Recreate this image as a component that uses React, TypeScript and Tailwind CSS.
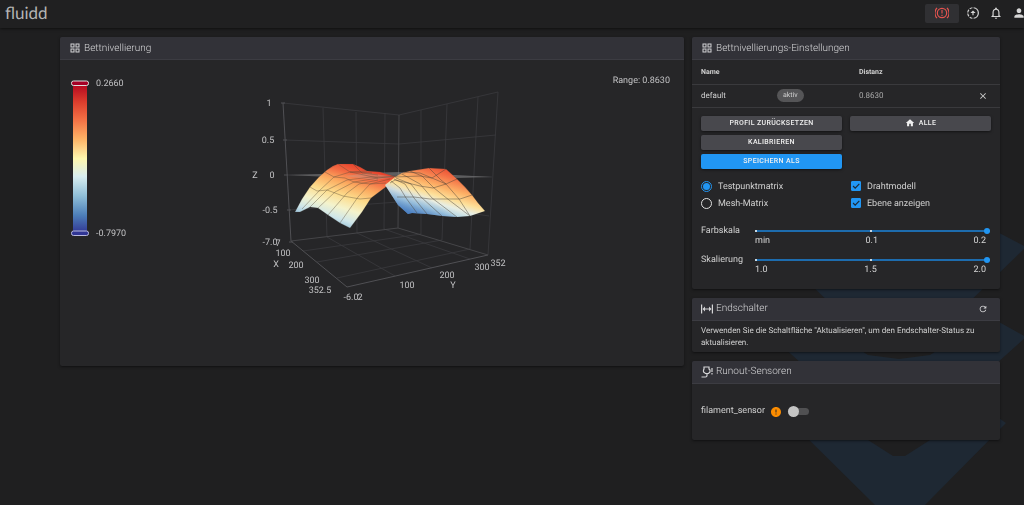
import { useState } from "react";
import type { ReactNode } from "react";
import {
  MdClose,
  MdError,
  MdHome,
  MdOutlineGridView,
  MdOutlineNotifications,
  MdPerson,
  MdRefresh,
} from "react-icons/md";

function BrakeAlertIcon() {
  return (
    <svg viewBox="0 0 24 24" className="size-3.5" fill="currentColor" aria-hidden="true">
      <path d="M12 3a9 9 0 1 0 0 18 9 9 0 0 0 0-18Zm0 16a7 7 0 1 1 0-14 7 7 0 0 1 0 14Z" />
      <path d="M11 7h2v6h-2zM11 15h2v2h-2z" />
      <path d="M4.2 3.8 2.8 2.4a13.6 13.6 0 0 0 0 19.2l1.4-1.4a11.6 11.6 0 0 1 0-16.4ZM19.8 3.8l1.4-1.4a13.6 13.6 0 0 1 0 19.2l-1.4-1.4a11.6 11.6 0 0 0 0-16.4Z" />
    </svg>
  );
}

function ProgressUploadIcon() {
  return (
    <svg viewBox="0 0 24 24" className="size-3.5" fill="currentColor" aria-hidden="true">
      <path d="M13 2.03v2.02a8 8 0 0 1 0 15.9v2.02A10 10 0 0 0 13 2.03ZM11 2.03a10 10 0 0 0-5.3 2.2l1.4 1.48A8 8 0 0 1 11 4.06V2.03ZM4.26 5.67A10 10 0 0 0 2.05 11h2a8 8 0 0 1 1.63-3.9L4.26 5.67ZM2.06 13a10 10 0 0 0 2.2 5.33l1.42-1.43A8 8 0 0 1 4.06 13h-2ZM7.1 18.37 5.67 19.74A10 10 0 0 0 11 22v-2a8 8 0 0 1-3.9-1.63Z" />
      <path d="M12 7.5 7.5 12H11v4h2v-4h3.5L12 7.5Z" />
    </svg>
  );
}

function ExpandHorizontalIcon() {
  return (
    <svg viewBox="0 0 24 24" className="size-3" fill="currentColor" aria-hidden="true">
      <path d="M0 3h2.4v18H0zM21.6 3H24v18h-2.4zM8 7v4h8V7l5 5-5 5v-4H8v4l-5-5 5-5Z" />
    </svg>
  );
}

function RunoutIcon() {
  return (
    <svg viewBox="0 0 24 24" className="size-3" fill="none" stroke="currentColor" strokeWidth="2.4" aria-hidden="true">
      <path d="M6 2h10v4l2 2v4l-3 3H9l-4-3V8l1-2V2Z" />
      <path d="M12 15v4c0 2-1 3-3 3H1M22 4v8M22 14v3" />
    </svg>
  );
}

function BackgroundLogo() {
  return (
    <svg viewBox="0 0 260 290" className="pointer-events-none fixed -right-1 bottom-0 h-[290px] w-[260px]" aria-hidden="true">
      <g fill="#1e2833">
        <path d="M258 32 218 11 131 0 40 11 4 32 102 127H160Z" />
        <path d="M258 122 222 102 162 140 131 144 100 140 40 102 4 122 102 210H160Z" />
        <path d="M238 208 222 197 162 225 137 241H125L100 225 40 197 24 208 107 290H157Z" />
      </g>
    </svg>
  );
}

type CardProps = { title: string; icon: ReactNode; action?: ReactNode; className?: string; children: ReactNode };

function Card({ title, icon, action, className = "", children }: CardProps) {
  return (
    <section className={`overflow-hidden rounded-xs bg-[#262628] shadow-sm shadow-black/40 ${className}`}>
      <header className="flex h-[23px] items-center justify-between border-b border-[#3c3c42] bg-[#323238] px-[9px] text-[#d4d4d6]">
        <h2 className="flex items-center gap-[3px] text-[10px] font-light">
          {icon}
          {title}
        </h2>
        {action}
      </header>
      {children}
    </section>
  );
}

const gridLines = [
  "M283 103 399 115 498 92",
  "M285 140 399 144 496 135",
  "M287 175 398 174 492 177",
  "M289 210 398 202 489 216",
  "M323 108 327 237 395 276",
  "M356 112 357 233 432 268",
  "M385 113 384 229 470 259",
  "M421 110 421 234 303 251",
  "M447 104 442 240 317 262",
  "M478 97 470 249 337 278",
  "M498 92 488 255",
];

const axisLabels: [number, number, string][] = [
  [269, 106, "1"],
  [268, 143, "0.5"],
  [272, 178, "0"],
  [255, 178, "Z"],
  [270, 213, "-0.5"],
  [270, 245, "-7.0"],
  [278, 246, "7"],
  [283, 256, "100"],
  [276, 267, "X"],
  [296, 268, "200"],
  [312, 283, "300"],
  [320, 293, "352.5"],
  [351, 300, "-6.0"],
  [360, 300, "2"],
  [407, 288, "100"],
  [447, 278, "200"],
  [453, 288, "Y"],
  [482, 270, "300"],
  [498, 266, "352"],
];

function MeshChart() {
  return (
    <svg viewBox="60 60 624 306" className="w-full" role="img" aria-label="Bettnivellierung">
      <defs>
        <linearGradient id="leftLobe" gradientUnits="userSpaceOnUse" x1="348" y1="161" x2="327" y2="226">
          <stop offset="0.02" stopColor="#e8422c" />
          <stop offset="0.16" stopColor="#f36b43" />
          <stop offset="0.32" stopColor="#fcab60" />
          <stop offset="0.5" stopColor="#fddc8c" />
          <stop offset="0.68" stopColor="#f4f3cc" />
          <stop offset="0.84" stopColor="#cfe6ea" />
          <stop offset="1" stopColor="#83b5d4" />
        </linearGradient>
        <linearGradient id="rightLobe" gradientUnits="userSpaceOnUse" x1="443" y1="166" x2="427" y2="218">
          <stop offset="0" stopColor="#ea4a30" />
          <stop offset="0.17" stopColor="#f47347" />
          <stop offset="0.38" stopColor="#fdb267" />
          <stop offset="0.55" stopColor="#fde09a" />
          <stop offset="0.68" stopColor="#e8eee4" />
          <stop offset="0.82" stopColor="#b4d7e6" />
          <stop offset="1" stopColor="#5f92c9" />
        </linearGradient>
        <linearGradient id="valley" gradientUnits="userSpaceOnUse" x1="404" y1="216" x2="414" y2="192">
          <stop offset="0" stopColor="#3f74bd" stopOpacity="0.7" />
          <stop offset="1" stopColor="#3f74bd" stopOpacity="0" />
        </linearGradient>
        <linearGradient id="scale" x1="0" y1="0" x2="0" y2="1">
          <stop offset="0" stopColor="#b3051f" />
          <stop offset="0.12" stopColor="#dc3d2d" />
          <stop offset="0.25" stopColor="#f57547" />
          <stop offset="0.37" stopColor="#fdb366" />
          <stop offset="0.5" stopColor="#fff7ae" />
          <stop offset="0.62" stopColor="#d9eef0" />
          <stop offset="0.75" stopColor="#90bfd8" />
          <stop offset="0.88" stopColor="#4d7fb9" />
          <stop offset="1" stopColor="#313695" />
        </linearGradient>
      </defs>

      <rect x="73" y="84" width="14" height="149" fill="url(#scale)" />
      <rect x="71.5" y="81" width="17" height="4.5" rx="2" fill="#a50026" stroke="#dddddd" />
      <rect x="71.5" y="231" width="17" height="4.5" rx="2" fill="#313695" stroke="#b9b9dd" />

      <g fill="none" stroke="#3a3a3d" strokeWidth="0.8">
        {gridLines.map((d) => (
          <path key={d} d={d} />
        ))}
      </g>
      <g fill="none" stroke="#505054" strokeWidth="1">
        <path d="M283 103 291 241 347 287 488 255" />
        <path d="M291 241 398 228 488 255M399 115 398 228" stroke="#454548" />
        <path d="M281 103h4M283 140h4M284 175h4M287 210h4M289 242h4" />
      </g>
      <path d="M287 175 398 172 492 177 395 180Z" fill="#a5a5a5" fillOpacity="0.4" />

      <path d="M295 212 302 199 310 187 319 177 327 170 333 166 338 164 353 164 360 167 367 171 380 172 396 177 387 186 371 198 362 212 350 228 340 223 328 215 318 208 310 207 300 212Z" fill="url(#leftLobe)" />
      <path d="M345 176 367 173 396 177 375 180Z" fill="#c0a894" fillOpacity="0.4" />
      <g fill="none" stroke="#5a4a38" strokeWidth="0.5" strokeOpacity="0.8">
        <path d="M295 212 302 199 310 187 319 177 327 170 338 164 353 164 367 171 380 172 396 177 387 186 371 198 362 212 350 228 340 223 328 215 318 208 310 207 300 212Z" strokeOpacity="0.35" />
        <path d="M310 187 317 191 327 190 343 196 360 199 371 198" />
        <path d="M325 172 334 177 345 178 354 182 370 184 386 183" />
        <path d="M338 164 350 172 367 171M350 172 378 178 395 176" />
        <path d="M302 209 319 191 334 177 350 172 372 173" />
        <path d="M310 207 327 190 347 180 371 177 395 177" />
        <path d="M318 208 335 192 354 182 378 178" />
        <path d="M328 215 347 193 359 184 378 180" />
        <path d="M340 223 358 197 370 184 390 179" />
        <path d="M353 164 362 173 378 175" />
      </g>

      <path d="M395 177 402 173 410 171 429 168 446 169 457 179 465 187 472 195 478 203 485 211 470 216 457 217 442 216 427 214 412 213 408 214 398 205 385 185Z" fill="url(#rightLobe)" />
      <path d="M395 177 457 217 442 216 427 214 412 213 408 214 398 205 385 185Z" fill="url(#valley)" />
      <g fill="none" stroke="#494136" strokeWidth="0.55" strokeOpacity="0.85">
        <path d="M395 177 410 171 429 168 446 169 457 179 472 195 485 211" strokeOpacity="0.4" />
        <path d="M390 183 395 180 408 183 420 186 433 188 446 184 457 179" />
        <path d="M397 197 414 197 430 199 446 199 460 199 472 195" />
        <path d="M404 172 420 173 432 178 446 169M395 177 420 176 432 178 446 184" />
        <path d="M410 171 422 176 434 188 449 200 470 216" />
        <path d="M429 168 441 180 446 184 459 199 470 216" />
        <path d="M402 174 420 184 432 198 457 217" />
        <path d="M396 178 411 184 421 197 442 216" />
        <path d="M394 179 405 184 414 198 427 214" />
        <path d="M391 181 400 188 406 198 417 213" />
      </g>

      <g fill="#c2c2c4" className="font-['Roboto',sans-serif] text-[9px]">
        <g textAnchor="middle">
          {axisLabels.map(([x, y, label]) => (
            <text key={`${x}-${y}`} x={x} y={y}>
              {label}
            </text>
          ))}
        </g>
        <text x="96" y="86">0.2660</text>
        <text x="96" y="236">-0.7970</text>
        <text x="670" y="83" textAnchor="end">Range: 0.8630</text>
      </g>
    </svg>
  );
}

const buttonBase =
  "flex h-[15px] items-center justify-center gap-1 rounded-xs text-[7px] font-medium tracking-wider text-[#f0f0f0] uppercase shadow-sm shadow-black/40";

function Radio({ label, checked, onSelect }: { label: string; checked: boolean; onSelect: () => void }) {
  return (
    <label className="flex h-[17px] items-center gap-1.5">
      <input
        type="radio"
        name="matrix"
        checked={checked}
        onChange={onSelect}
        className="size-[11px] appearance-none rounded-full border border-[#e0e0e0] bg-clip-content p-px checked:border-[#2196f3] checked:bg-[#2196f3]"
      />
      <span className="pt-0.5 leading-3">{label}</span>
    </label>
  );
}

function Check({ label }: { label: string }) {
  return (
    <label className="flex h-[17px] items-center gap-1.5">
      <span className="grid size-[11px] place-items-center">
        <input
          type="checkbox"
          defaultChecked
          className="peer col-start-1 row-start-1 size-2.5 appearance-none rounded-[1px] border border-[#e0e0e0] checked:border-[#2196f3] checked:bg-[#2196f3]"
        />
        <svg viewBox="0 0 24 24" className="pointer-events-none col-start-1 row-start-1 hidden size-2.5 peer-checked:block" fill="none" stroke="#1d2a36" strokeWidth="3" aria-hidden="true">
          <path d="m5 12 5 5L20 7" />
        </svg>
      </span>
      <span className="pt-0.5 leading-3">{label}</span>
    </label>
  );
}

function Slider({ label, ticks }: { label: string; ticks: string[] }) {
  const id = `slider-${label}`;
  return (
    <div className="flex h-[29px] items-start pr-px">
      <label htmlFor={id} className="w-[54px] shrink-0 leading-3">
        {label}
      </label>
      <div className="min-w-0 flex-1">
        <div className="grid h-3 items-center">
          <input
            id={id}
            type="range"
            min={0}
            max={2}
            step={0.1}
            defaultValue={2}
            className="col-start-1 row-start-1 h-3 w-full appearance-none bg-transparent [&::-webkit-slider-runnable-track]:h-0.5 [&::-webkit-slider-runnable-track]:bg-[#1d6cae] [&::-webkit-slider-thumb]:-mt-0.5 [&::-webkit-slider-thumb]:size-1.5 [&::-webkit-slider-thumb]:appearance-none [&::-webkit-slider-thumb]:rounded-full [&::-webkit-slider-thumb]:bg-[#2196f3]"
          />
          <div className="pointer-events-none col-start-1 row-start-1 flex justify-between pr-[3px]">
            <i className="size-0.5 bg-[#c9d8e4]" />
            <i className="size-0.5 bg-[#c9d8e4]" />
            <i className="size-0.5" />
          </div>
        </div>
        <div className="flex justify-between pr-1 text-[9px] leading-[9px] text-[#d6d6d6]">
          {ticks.map((t) => (
            <span key={t}>{t}</span>
          ))}
        </div>
      </div>
    </div>
  );
}

export default function App() {
  const [matrix, setMatrix] = useState("probed");
  return (
    <div className="min-h-screen bg-[#1f1f20] font-['Roboto',sans-serif] text-[#d0d0d0] [text-rendering:geometricPrecision]">
      <BackgroundLogo />
      <header className="relative flex h-7 items-center justify-between bg-[#202021] pl-[5px] shadow-sm shadow-black/40">
        <a href="#" className="pb-0.5 font-['Lato',sans-serif] text-[17px] leading-5 text-[#b4b4b4]">
          fluidd
        </a>
        <div className="-mr-0.5 flex items-center gap-[7px] pb-0.5 text-[#d6d6d6]">
          <button aria-label="Not-Aus" className="flex h-[19px] w-[34px] items-center justify-center rounded-xs bg-[#303033] text-[#e5534f]">
            <BrakeAlertIcon />
          </button>
          <div className="flex items-center gap-[9px]">
            <button aria-label="Hochladen">
              <ProgressUploadIcon />
            </button>
            <button aria-label="Benachrichtigungen">
              <MdOutlineNotifications className="size-3.5" />
            </button>
            <button aria-label="Benutzer">
              <MdPerson className="size-3.5" />
            </button>
          </div>
        </div>
      </header>

      <main className="relative grid grid-cols-12 items-start gap-2 pt-[9px] pr-6 pl-[60px]">
        <Card title="Bettnivellierung" icon={<MdOutlineGridView className="size-3" />} className="col-span-8">
          <MeshChart />
        </Card>

        <div className="col-span-4 flex flex-col gap-[9px]">
          <Card title="Bettnivellierungs-Einstellungen" icon={<MdOutlineGridView className="size-3" />}>
            <table className="w-full table-fixed text-left text-[8px]">
              <thead>
                <tr className="h-6 border-b border-[#3a3a3d] text-[7px]">
                  <th className="w-[77px] pl-[9px] font-bold">Name</th>
                  <th className="w-[82px]" />
                  <th className="w-[90px] pl-2 font-bold">Distanz</th>
                  <th />
                </tr>
              </thead>
              <tbody>
                <tr className="h-[23px] border-b border-[#3a3a3d]">
                  <td className="pl-[9px]">default</td>
                  <td className="pl-2">
                    <span className="inline-flex h-[13px] items-center rounded-full bg-[#555557] px-1.5 text-[7px]">aktiv</span>
                  </td>
                  <td className="pl-2 text-[#a8a8a8]">0.8630</td>
                  <td className="pr-3">
                    <button aria-label="Entfernen" className="ml-auto flex">
                      <MdClose className="size-2.5" />
                    </button>
                  </td>
                </tr>
              </tbody>
            </table>
            <div className="px-[9px] pt-2 pb-[5px] text-[9px]">
              <div className="grid grid-cols-2 items-start gap-2">
                <div className="flex flex-col gap-1">
                  <button className={`${buttonBase} bg-[#48484d]`}>Profil zurücksetzen</button>
                  <button className={`${buttonBase} bg-[#48484d]`}>Kalibrieren</button>
                  <button className={`${buttonBase} bg-[#2196f3]`}>Speichern als</button>
                </div>
                <button className={`${buttonBase} bg-[#48484d]`}>
                  <MdHome className="size-2.5" />
                  Alle
                </button>
              </div>
              <div className="mt-[9px] grid grid-cols-2 gap-2">
                <div>
                  <Radio label="Testpunktmatrix" checked={matrix === "probed"} onSelect={() => setMatrix("probed")} />
                  <Radio label="Mesh-Matrix" checked={matrix === "mesh"} onSelect={() => setMatrix("mesh")} />
                </div>
                <div>
                  <Check label="Drahtmodell" />
                  <Check label="Ebene anzeigen" />
                </div>
              </div>
              <div className="mt-[13px] pb-px">
                <Slider label="Farbskala" ticks={["min", "0.1", "0.2"]} />
                <Slider label="Skalierung" ticks={["1.0", "1.5", "2.0"]} />
              </div>
            </div>
          </Card>

          <Card
            title="Endschalter"
            icon={<ExpandHorizontalIcon />}
            action={
              <button aria-label="Aktualisieren" className="mr-[3px]">
                <MdRefresh className="size-2.5" />
              </button>
            }
          >
            <p className="px-[9px] pt-1 pb-[3px] text-[8px] leading-3">
              Verwenden Sie die Schaltfläche "Aktualisieren", um den Endschalter-Status zu aktualisieren.
            </p>
          </Card>

          <Card title="Runout-Sensoren" icon={<RunoutIcon />}>
            <div className="flex h-14 items-center px-[9px] text-[9px]">
              <label htmlFor="filament">filament_sensor</label>
              <MdError className="ml-[5px] size-3 text-[#fb8c00]" />
              <input
                id="filament"
                type="checkbox"
                role="switch"
                className="ml-1.5 h-[7px] w-[21px] appearance-none rounded-full bg-[#505052] before:-mt-0.5 before:block before:size-[11px] before:rounded-full before:bg-[#c4c4c4] checked:before:ml-2.5"
              />
            </div>
          </Card>
        </div>
      </main>
    </div>
  );
}
